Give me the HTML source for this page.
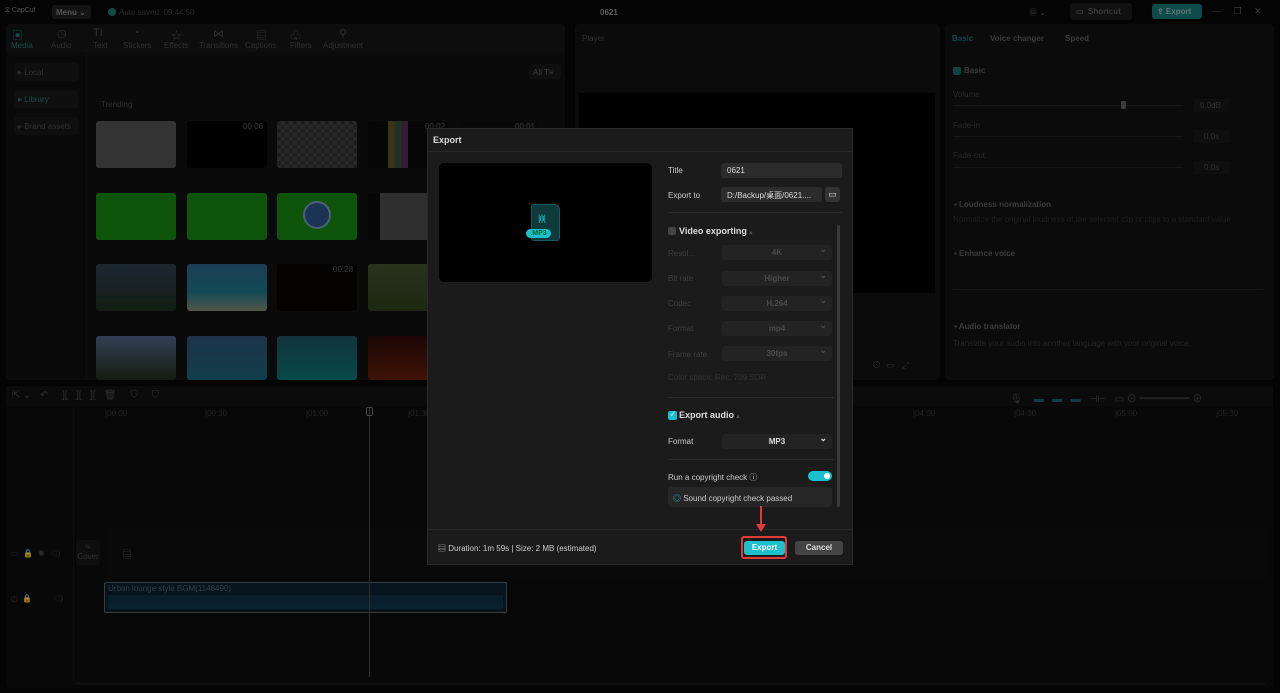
<!DOCTYPE html>
<html><head><meta charset="utf-8"><style>
*{box-sizing:border-box;margin:0;padding:0}
body{width:1280px;height:693px;background:#060606;font-family:"Liberation Sans","Noto Sans CJK SC",sans-serif;font-size:8px;color:#555;position:relative;overflow:hidden}
.a{position:absolute}
.p{position:absolute;background:#111;border-radius:4px}
.t{position:absolute;white-space:nowrap}
.th{position:absolute;width:80px;height:47px;border-radius:3px}
.dd{position:absolute;left:722px;width:110px;height:15px;background:#232323;border-radius:3px;text-align:center;line-height:15px;font-weight:bold;font-size:8px;color:#4a4a4a}
.dd:after{content:"⌄";position:absolute;right:5px;top:-3px;font-size:9px}
.lb{position:absolute;left:668px;font-size:8px;color:#3e3e3e}
</style></head><body>
<!-- top bar -->
<div class="t" style="left:5px;top:7px;color:#777;font-size:7px">⧖ CapCut</div>
<div class="a" style="left:52px;top:5px;width:39px;height:14px;background:#1e1e1e;border-radius:3px;color:#777;font-size:8px;padding:3px 4px;font-weight:bold">Menu ⌄</div>
<div class="a" style="left:108px;top:8px;width:8px;height:8px;border-radius:50%;background:#1b6b6b"></div>
<div class="t" style="left:119px;top:8px;color:#3c3c3c">Auto saved: 09:44:50</div>
<div class="t" style="left:600px;top:8px;color:#888;font-weight:bold">0621</div>
<div class="t" style="left:1029px;top:7px;color:#555">▦ ⌄</div>
<div class="a" style="left:1070px;top:3px;width:62px;height:17px;background:#181818;border-radius:3px;color:#555;padding:4px 6px;font-weight:bold">▭ &nbsp;Shortcut</div>
<div class="a" style="left:1152px;top:4px;width:50px;height:15px;background:#136b6b;border-radius:3px;color:#8aa;padding:3px 5px;font-weight:bold">⇪ Export</div>
<div class="t" style="left:1212px;top:6px;color:#555;font-size:9px">—&nbsp;&nbsp;&nbsp;&nbsp;&nbsp;❐&nbsp;&nbsp;&nbsp;&nbsp;&nbsp;✕</div>

<!-- media panel -->
<div class="p" style="left:6px;top:24px;width:559px;height:356px;background:#0f0f0f"></div>
<div class="a" style="left:6px;top:24px;width:559px;height:28px;background:#141414;border-radius:4px 4px 0 0"></div>
<div class="t" style="left:12px;top:27px;color:#1c6b6b;font-size:11px">▣</div><div class="t" style="left:11px;top:41px;color:#1c6b6b">Media</div>
<div class="t" style="left:57px;top:27px;font-size:11px;color:#444">◷</div><div class="t" style="left:51px;top:41px;color:#444">Audio</div>
<div class="t" style="left:93px;top:27px;font-size:11px;color:#444">TI</div><div class="t" style="left:93px;top:41px;color:#444">Text</div>
<div class="t" style="left:133px;top:27px;font-size:11px;color:#444">◔</div><div class="t" style="left:123px;top:41px;color:#444">Stickers</div>
<div class="t" style="left:171px;top:27px;font-size:11px;color:#444">☆</div><div class="t" style="left:164px;top:41px;color:#444">Effects</div>
<div class="t" style="left:213px;top:27px;font-size:11px;color:#444">⋈</div><div class="t" style="left:199px;top:41px;color:#444">Transitions</div>
<div class="t" style="left:256px;top:27px;font-size:11px;color:#444">▤</div><div class="t" style="left:245px;top:41px;color:#444">Captions</div>
<div class="t" style="left:290px;top:27px;font-size:11px;color:#444">♧</div><div class="t" style="left:290px;top:41px;color:#444">Filters</div>
<div class="t" style="left:339px;top:27px;font-size:11px;color:#444">⚲</div><div class="t" style="left:323px;top:41px;color:#444">Adjustment</div>
<div class="a" style="left:14px;top:63px;width:64px;height:18px;background:#161616;border-radius:3px;color:#444;padding:5px 4px">▸ Local</div>
<div class="a" style="left:14px;top:90px;width:64px;height:18px;background:#161616;border-radius:3px;color:#1c6b6b;padding:5px 4px">▸ Library</div>
<div class="a" style="left:14px;top:117px;width:64px;height:18px;background:#161616;border-radius:3px;color:#444;padding:5px 4px">▸ Brand assets</div>
<div class="a" style="left:86px;top:52px;width:1px;height:328px;background:#161616"></div>
<div class="a" style="left:529px;top:64px;width:32px;height:15px;background:#161616;border-radius:3px;color:#555;padding:4px 4px;white-space:nowrap">All T≡</div>
<div class="t" style="left:101px;top:100px;color:#444">Trending</div>
<div class="th" style="left:96px;top:121px;background:#4a4a4a"></div>
<div class="th" style="left:187px;top:121px;background:#000"></div><div class="t" style="left:243px;top:122px;color:#555">00:06</div>
<div class="th" style="left:277px;top:121px;background:repeating-conic-gradient(#3a3a3a 0 25%,#2c2c2c 0 50%) 0 0/8px 8px"></div>
<div class="th" style="left:368px;top:121px;background:linear-gradient(90deg,#0a0a0a 25%,#5a4a1a 25% 33%,#2a4a3a 33% 41%,#4a2a4a 41% 50%,#0a0a0a 50%)"></div><div class="t" style="left:425px;top:122px;color:#555">00:02</div>
<div class="th" style="left:459px;top:121px;background:#0c0c0c"></div><div class="t" style="left:515px;top:122px;color:#555">00:01</div>
<div class="th" style="left:96px;top:193px;background:#157a10"></div>
<div class="th" style="left:187px;top:193px;background:#157a10"></div>
<div class="th" style="left:277px;top:193px;background:#157a10"></div><div class="a" style="left:303px;top:201px;width:28px;height:28px;border-radius:50%;background:#2a4a7a;border:2px solid #6a8aa8"></div>
<div class="th" style="left:368px;top:193px;background:linear-gradient(90deg,#0a0a0a 15%,#444 15% 85%,#0a0a0a 85%)"></div>
<div class="th" style="left:96px;top:264px;background:linear-gradient(#2a3a4a,#1a2a1a)"></div>
<div class="th" style="left:187px;top:264px;background:linear-gradient(#2a5a7a,#1a6a7a 60%,#7a7a6a)"></div>
<div class="th" style="left:277px;top:264px;background:#080404"></div><div class="t" style="left:333px;top:265px;color:#555">00:28</div>
<div class="th" style="left:368px;top:264px;background:linear-gradient(#3a4a2a,#2a3a1a)"></div>
<div class="th" style="left:96px;top:336px;height:44px;background:linear-gradient(#4a5a7a,#1a2a1a)"></div>
<div class="th" style="left:187px;top:336px;height:44px;background:linear-gradient(#2a4a6a,#1a5a6a)"></div>
<div class="th" style="left:277px;top:336px;height:44px;background:linear-gradient(#1a4a5a,#0a6a6a)"></div>
<div class="th" style="left:368px;top:336px;height:44px;background:linear-gradient(#2a0a0a,#5a1a0a)"></div>

<!-- player -->
<div class="p" style="left:575px;top:24px;width:365px;height:356px;background:#101010"></div>
<div class="t" style="left:582px;top:34px;color:#444">Player</div>
<div class="a" style="left:579px;top:93px;width:356px;height:200px;background:#000"></div>
<div class="t" style="left:872px;top:358px;color:#444;font-size:9px">⊙ &nbsp;▭ &nbsp;&nbsp;⤢</div>

<!-- right panel -->
<div class="p" style="left:945px;top:24px;width:329px;height:356px;background:#101010"></div>
<div class="t" style="left:952px;top:34px;color:#1a6060;font-weight:bold">Basic</div>
<div class="t" style="left:990px;top:34px;color:#555;font-weight:bold">Voice changer</div>
<div class="t" style="left:1065px;top:34px;color:#555;font-weight:bold">Speed</div>
<div class="a" style="left:953px;top:67px;width:8px;height:8px;background:#1a6060;border-radius:2px"></div>
<div class="t" style="left:964px;top:66px;color:#555;font-weight:bold">Basic</div>
<div class="t" style="left:953px;top:90px;color:#3a3a3a">Volume</div>
<div class="a" style="left:953px;top:105px;width:230px;height:1px;background:#222"></div>
<div class="a" style="left:1121px;top:101px;width:5px;height:8px;background:#555;border-radius:1px"></div>
<div class="a" style="left:1194px;top:99px;width:35px;height:13px;background:#161616;color:#444;padding:2px 6px">0.0dB</div>
<div class="t" style="left:953px;top:121px;color:#3a3a3a">Fade-in</div>
<div class="a" style="left:953px;top:136px;width:230px;height:1px;background:#222"></div>
<div class="a" style="left:1194px;top:130px;width:35px;height:13px;background:#161616;color:#444;padding:2px 10px">0.0s</div>
<div class="t" style="left:953px;top:151px;color:#3a3a3a">Fade-out</div>
<div class="a" style="left:953px;top:167px;width:230px;height:1px;background:#222"></div>
<div class="a" style="left:1194px;top:161px;width:35px;height:13px;background:#161616;color:#444;padding:2px 10px">0.0s</div>
<div class="t" style="left:954px;top:200px;color:#555;font-weight:bold">▪ Loudness normalization</div>
<div class="t" style="left:953px;top:215px;color:#2c2c2c">Normalize the original loudness of the selected clip or clips to a standard value</div>
<div class="t" style="left:954px;top:249px;color:#555;font-weight:bold">▪ Enhance voice</div>
<div class="a" style="left:953px;top:289px;width:310px;height:1px;background:#1e1e1e"></div>
<div class="t" style="left:954px;top:322px;color:#555;font-weight:bold">▪ Audio translator</div>
<div class="t" style="left:953px;top:339px;color:#353535">Translate your audio into another language with your original voice.</div>

<!-- timeline -->
<div class="p" style="left:6px;top:386px;width:1267px;height:302px;background:#0c0c0c"></div>
<div class="a" style="left:6px;top:386px;width:1267px;height:20px;background:#101010"></div>
<div class="t" style="left:12px;top:390px;color:#444;font-size:10px">⇱ ⌄ &nbsp; ↶ &nbsp; &nbsp; ][ &nbsp; ][ &nbsp; ][ &nbsp; 🗑 &nbsp; &nbsp; ⛉ &nbsp; &nbsp; ⛉</div>
<div class="t" style="left:1010px;top:390px;color:#444;font-size:10px">🎙 &nbsp; &nbsp;<span style="color:#1a5a5a">▬ &nbsp; ▬ &nbsp; ▬</span> &nbsp; ⊣⊢ &nbsp; ▭ ⊖ ━━━━━ ⊕</div>
<div class="t" style="left:105px;top:409px;color:#333">|00:00</div>
<div class="t" style="left:205px;top:409px;color:#333">|00:30</div>
<div class="t" style="left:306px;top:409px;color:#333">|01:00</div>
<div class="t" style="left:408px;top:409px;color:#333">|01:30</div>
<div class="t" style="left:913px;top:409px;color:#333">|04:00</div>
<div class="t" style="left:1014px;top:409px;color:#333">|04:30</div>
<div class="t" style="left:1115px;top:409px;color:#333">|05:00</div>
<div class="t" style="left:1216px;top:409px;color:#333">|05:30</div>
<div class="a" style="left:73px;top:406px;width:1px;height:278px;background:#141414"></div>
<div class="a" style="left:106px;top:528px;width:1160px;height:50px;background:#0e0e0e"></div>
<div class="t" style="left:11px;top:548px;color:#3a3a3a">▭ &nbsp;🔒 &nbsp;◉ &nbsp;◁)</div>
<div class="a" style="left:76px;top:540px;width:24px;height:25px;background:#151515;border-radius:3px;color:#444;text-align:center;padding-top:3px;line-height:9px">✎<br>Cover</div>
<div class="t" style="left:122px;top:546px;color:#444;font-size:10px">▤</div>
<div class="t" style="left:11px;top:593px;color:#3a3a3a">◷ &nbsp;🔒 &nbsp; &nbsp; &nbsp; &nbsp; ◁)</div>
<div class="a" style="left:104px;top:582px;width:403px;height:31px;background:#0b1c2a;border:1px solid #555;border-radius:2px"></div>
<div class="a" style="left:108px;top:595px;width:395px;height:14px;background:linear-gradient(#0d2a3a,#0f3244)"></div>
<div class="t" style="left:108px;top:584px;color:#4a5a66">Urban lounge style BGM(1148490)</div>
<div class="a" style="left:369px;top:407px;width:1px;height:270px;background:#444"></div>
<div class="a" style="left:366px;top:407px;width:7px;height:9px;border:1px solid #666;border-radius:2px"></div>
<div class="a" style="left:75px;top:682px;width:1190px;height:3px;background:#161616;border-radius:2px"></div>

<!-- dim overlay -->
<div class="a" style="left:0;top:0;width:1280px;height:693px;background:rgba(0,0,0,0.3)"></div>

<!-- dialog -->
<div class="a" style="left:427px;top:128px;width:426px;height:437px;background:#1b1b1b;border:1px solid #2a2a2a"></div>
<div class="a" style="left:428px;top:151px;width:424px;height:1px;background:#262626"></div>
<div class="t" style="left:433px;top:135px;color:#ddd;font-weight:bold;font-size:9px">Export</div>
<div class="a" style="left:439px;top:163px;width:213px;height:119px;background:#000;border-radius:5px"></div>
<div class="a" style="left:531px;top:204px;width:29px;height:37px;background:#0f3a3c;border:1px solid #1a5a5c;border-radius:3px 6px 3px 3px"></div>
<div class="t" style="left:538px;top:213px;color:#2ab8c0;font-size:9px;letter-spacing:-1px">|ı|ı|</div>
<div class="a" style="left:526px;top:229px;width:25px;height:9px;background:#1cc0cc;border-radius:5px;color:#063;font-size:7px;font-weight:bold;text-align:center;line-height:9px">.MP3</div>
<div class="lb" style="top:166px;color:#ccc">Title</div>
<div class="a" style="left:721px;top:163px;width:121px;height:15px;background:#2c2c2c;border-radius:3px;color:#ddd;padding:3px 6px">0621</div>
<div class="lb" style="top:191px;color:#ccc">Export to</div>
<div class="a" style="left:721px;top:187px;width:101px;height:15px;background:#2c2c2c;border-radius:3px;color:#ddd;padding:3px 6px;font-size:8px;white-space:nowrap;overflow:hidden">D:/Backup/桌面/0621....</div>
<div class="a" style="left:825px;top:187px;width:15px;height:15px;background:#333;border-radius:3px;color:#ddd;text-align:center;font-size:9px;line-height:14px">▭</div>
<div class="a" style="left:668px;top:212px;width:174px;height:1px;background:#2a2a2a"></div>
<div class="a" style="left:837px;top:225px;width:3px;height:282px;background:#3a3a3a;border-radius:2px"></div>
<div class="a" style="left:668px;top:227px;width:8px;height:8px;background:#444;border-radius:2px"></div>
<div class="t" style="left:679px;top:226px;color:#ddd;font-weight:bold;font-size:9px">Video exporting <span style="color:#555;font-size:6px">▴</span></div>
<div class="lb" style="top:249px">Resol...</div><div class="dd" style="top:245px">4K</div>
<div class="lb" style="top:274px">Bit rate</div><div class="dd" style="top:271px">Higher</div>
<div class="lb" style="top:299px">Codec</div><div class="dd" style="top:296px">H.264</div>
<div class="lb" style="top:324px">Format</div><div class="dd" style="top:321px">mp4</div>
<div class="lb" style="top:350px">Frame rate</div><div class="dd" style="top:346px">30fps</div>
<div class="lb" style="top:373px;color:#333">Color space: Rec. 709 SDR</div>
<div class="a" style="left:668px;top:397px;width:166px;height:1px;background:#2a2a2a"></div>
<div class="a" style="left:668px;top:411px;width:9px;height:9px;background:#1cc0cc;border-radius:2px;color:#fff;font-size:6px;text-align:center;line-height:9px">✓</div>
<div class="t" style="left:679px;top:410px;color:#ddd;font-weight:bold;font-size:9px">Export audio <span style="color:#555;font-size:6px">▴</span></div>
<div class="lb" style="top:437px;color:#ccc">Format</div>
<div class="dd" style="top:434px;color:#ddd">MP3</div>
<div class="a" style="left:668px;top:459px;width:166px;height:1px;background:#2a2a2a"></div>
<div class="lb" style="top:472px;color:#ccc">Run a copyright check ⓘ</div>
<div class="a" style="left:808px;top:471px;width:24px;height:10px;background:#1cc0cc;border-radius:5px"></div>
<div class="a" style="left:824px;top:473px;width:6px;height:6px;background:#fff;border-radius:50%"></div>
<div class="a" style="left:668px;top:487px;width:164px;height:20px;background:#262626;border-radius:3px;color:#ccc;padding:6px 5px;font-size:8px"><span style="color:#1cc0cc">◎</span> Sound copyright check passed</div>
<div class="a" style="left:428px;top:529px;width:424px;height:1px;background:#262626"></div>
<div class="t" style="left:438px;top:543px;color:#ccc;font-size:8px">▤ Duration: 1m 59s | Size: 2 MB (estimated)</div>
<div class="a" style="left:744px;top:541px;width:41px;height:14px;background:#1cc0cc;border-radius:3px;color:#fff;font-weight:bold;text-align:center;line-height:14px">Export</div>
<div class="a" style="left:741px;top:536px;width:46px;height:23px;border:2px solid #e23a3a;border-radius:3px"></div>
<div class="a" style="left:760px;top:506px;width:2px;height:20px;background:#e23a3a"></div>
<div class="a" style="left:756px;top:524px;width:0;height:0;border-left:5px solid transparent;border-right:5px solid transparent;border-top:8px solid #e23a3a"></div>
<div class="a" style="left:795px;top:541px;width:48px;height:14px;background:#444;border-radius:3px;color:#ddd;font-weight:bold;text-align:center;line-height:14px">Cancel</div>
</body></html>
